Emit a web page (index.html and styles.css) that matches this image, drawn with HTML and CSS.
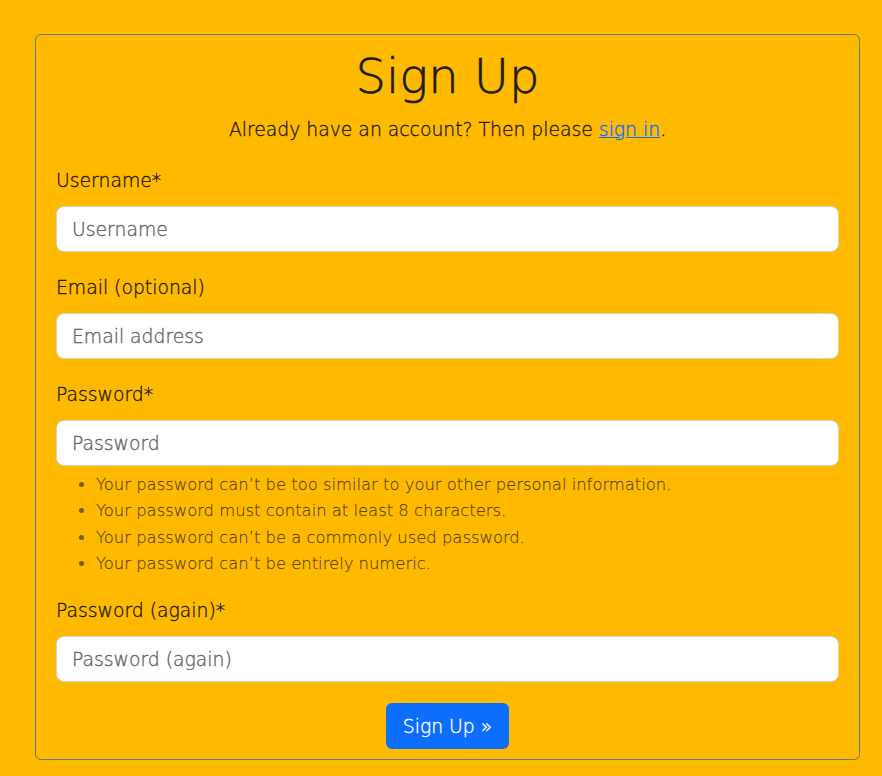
FILE: index.html
```html
<!DOCTYPE html>
<html lang="en">
<head>
<meta charset="utf-8">
<title>Sign Up</title>
<link rel="stylesheet" href="styles.css">
</head>
<body>
<main class="page">
  <section class="card">
    <h1 class="title">Sign Up</h1>
    <p class="lead">Already have an account? Then please <a href="#" class="link">sign in</a>.</p>
    <form class="form">
      <div class="group">
        <label class="label" for="u">Username*</label>
        <input class="input" id="u" type="text" placeholder="Username">
      </div>
      <div class="group">
        <label class="label" for="e">Email (optional)</label>
        <input class="input" id="e" type="email" placeholder="Email address">
      </div>
      <div class="group">
        <label class="label" for="p1">Password*</label>
        <input class="input" id="p1" type="password" placeholder="Password">
        <ul class="help">
          <li>Your password can’t be too similar to your other personal information.</li>
          <li>Your password must contain at least 8 characters.</li>
          <li>Your password can’t be a commonly used password.</li>
          <li>Your password can’t be entirely numeric.</li>
        </ul>
      </div>
      <div class="group">
        <label class="label" for="p2">Password (again)*</label>
        <input class="input" id="p2" type="password" placeholder="Password (again)">
      </div>
      <div class="actions">
        <button class="btn" type="button">Sign Up »</button>
      </div>
    </form>
  </section>
</main>
</body>
</html>
```
FILE: styles.css
```css
* { box-sizing: border-box; }
html, body {
  margin: 0;
  padding: 0;
  background: #ffba00;
}
body {
  font-family: "DejaVu Sans", "Open Sans", sans-serif;
  font-weight: 300;
  color: #1f1a08;
  -webkit-text-stroke: 0.35px currentColor;
}
.page {
  padding: 34px 22px 16px 35px;
}
.card {
  border: 1px solid #5f7a80;
  border-radius: 6px;
  padding: 11px 20px 10px 20px;
}
.title {
  margin: 0;
  text-align: center;
  font-weight: 300;
  font-size: 48px;
  line-height: 60px;
  color: #1f1a08;
  -webkit-text-stroke: 0.6px currentColor;
}
.lead {
  margin: 10px 0 0 0;
  text-align: center;
  font-size: 18.8px;
  line-height: 28px;
}
.link {
  color: #0d6efd;
  text-decoration: underline;
}
.form {
  margin-top: 23px;
  display: flex;
  flex-direction: column;
  gap: 22px;
}
.group {
  display: flex;
  flex-direction: column;
}
.label {
  font-size: 18.8px;
  line-height: 28px;
  margin-bottom: 11px;
}
.input {
  height: 46px;
  width: 100%;
  border: 1px solid #d6d2c6;
  border-radius: 8px;
  background: #fff;
  padding: 0 15px;
  font-family: inherit;
  font-weight: 300;
  font-size: 18.8px;
  color: #212529;
}
.input::placeholder { color: #5f6468; }
.help {
  margin: 6px 0 -2px 0;
  padding-left: 40px;
  font-size: 16.4px;
  line-height: 26.3px;
  color: rgba(40, 34, 10, 0.62);
}
.actions {
  display: flex;
  justify-content: center;
  margin-top: -1px;
}
.btn {
  background: #0d6efd;
  color: #fff;
  border: none;
  border-radius: 6px;
  height: 46px;
  padding: 0 17px;
  font-family: inherit;
  font-weight: 300;
  font-size: 18.8px;
  -webkit-text-stroke: 0.35px currentColor;
}
```
